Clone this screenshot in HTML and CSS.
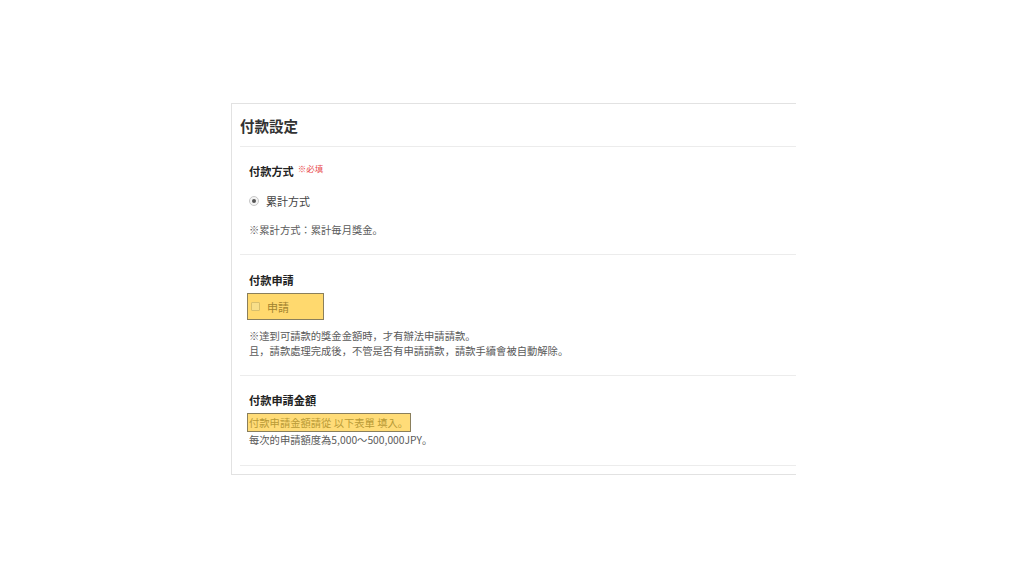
FILE: index.html
```html
<!DOCTYPE html>
<html lang="ja">
<head>
<meta charset="utf-8">
<title>付款設定</title>
<link rel="stylesheet" href="styles.css">
</head>
<body>
<div class="page">
  <div class="card">
    <div class="card-header"><h2 class="title">付款設定</h2></div>

    <div class="section s1">
      <div class="label">付款方式<span class="req">※必填</span></div>
      <div class="radio-row"><span class="radio"></span><span class="radio-text">累計方式</span></div>
      <p class="note">※累計方式：累計毎月獎金。</p>
    </div>

    <div class="section s2">
      <div class="label">付款申請</div>
      <div class="hl-box"><span class="checkbox"></span><span class="hl-text">申請</span></div>
      <p class="note lines">※達到可請款的獎金金額時，才有辦法申請請款。<br>且，請款處理完成後，不管是否有申請請款，請款手續會被自動解除。</p>
    </div>

    <div class="section s3">
      <div class="label">付款申請金額</div>
      <div class="hl-inline">付款申請金額請從 以下表單 填入。</div>
      <p class="note amount">每次的申請額度為5,000～500,000JPY。</p>
    </div>
  </div>
</div>
</body>
</html>
```

FILE: styles.css
```css
html, body {
  margin: 0;
  padding: 0;
  background: #ffffff;
}
body {
  font-family: "Noto Sans CJK JP", "Noto Sans CJK TC", "Noto Sans", sans-serif;
  color: #333;
}
.page {
  padding: 103px 0 0 231px;
}
.card {
  width: 565px;
  border: 1px solid #e2e2e2;
  border-right: none;
  padding: 0 0 8px 8px;
  box-sizing: border-box;
}
.card-header {
  border-bottom: 1px solid #ececec;
  padding: 12px 0 10px 0;
}
.title {
  margin: 0;
  font-size: 14.5px;
  line-height: 20px;
  font-weight: 700;
  color: #333;
}
.section {
  border-bottom: 1px solid #ececec;
  padding-left: 9px;
}
.s1 { padding-top: 16px; padding-bottom: 16px; }
.s2 { padding-top: 17px; padding-bottom: 17px; }
.s3 { padding-top: 16px; padding-bottom: 18px; }
.label {
  font-size: 11.2px;
  line-height: 16px;
  font-weight: 700;
  color: #222;
  display: flex;
  align-items: flex-start;
}
.req {
  font-size: 8.5px;
  line-height: 12px;
  font-weight: 400;
  color: #e8484a;
  margin-left: 4px;
  margin-top: -1px;
}
.radio-row {
  margin-top: 14px;
  display: flex;
  align-items: center;
  height: 16px;
}
.radio {
  width: 8px;
  height: 8px;
  border-radius: 50%;
  border: 1px solid #c8c8c8;
  background: #f4f4f4;
  position: relative;
  margin-left: 0;
  margin-right: 7px;
  box-sizing: content-box;
}
.radio::after {
  content: "";
  position: absolute;
  left: 2px;
  top: 2px;
  width: 4px;
  height: 4px;
  border-radius: 50%;
  background: #555;
}
.radio-text {
  font-size: 11px;
  line-height: 16px;
  color: #444;
}
.note {
  margin: 13px 0 0;
  font-size: 10.3px;
  line-height: 16px;
  color: #5a5a5a;
}
.note.lines {
  margin-top: 8px;
  line-height: 15px;
}
.hl-box {
  margin-top: 5px;
  margin-left: -2px;
  width: 77px;
  height: 27px;
  box-sizing: border-box;
  background: #ffd96e;
  border: 1px solid #8a7f5c;
  display: flex;
  align-items: center;
  padding-left: 3px;
}
.checkbox {
  width: 7px;
  height: 7px;
  border: 1px solid #d8bf6c;
  background: #f8df8a;
  border-radius: 1px;
  margin-right: 7px;
}
.hl-text {
  font-size: 11px;
  line-height: 16px;
  color: #a1832e;
}
.hl-inline {
  margin-top: 4px;
  margin-left: -2px;
  display: inline-block;
  background: #ffdc78;
  border: 1px solid #8a7f5c;
  padding: 0 2px 0 1px;
  height: 19px;
  box-sizing: border-box;
  font-size: 10.3px;
  line-height: 17px;
  color: #b99a36;
  white-space: pre;
}
.note.amount {
  margin-top: 0;
  line-height: 15px;
}
```
